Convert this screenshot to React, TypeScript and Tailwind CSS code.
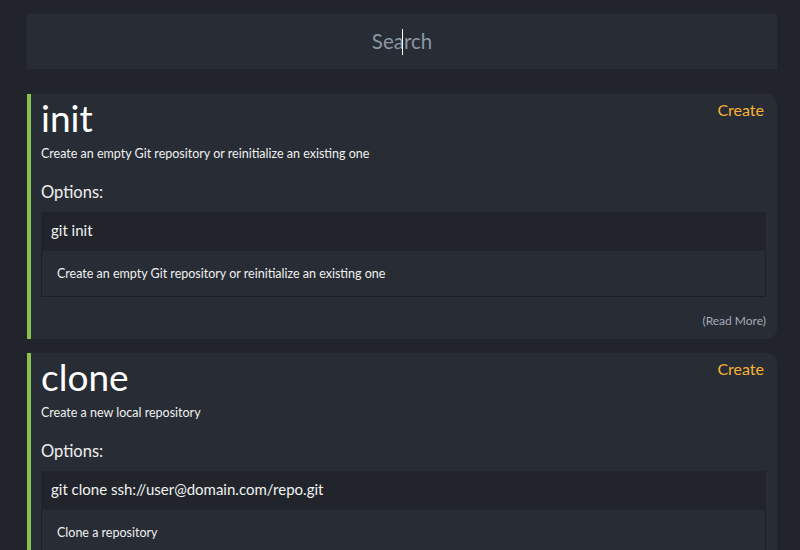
import React from "react";

interface Cmd {
  name: string;
  desc: string;
  options: { cmd: string; text: string }[];
}

const commands: Cmd[] = [
  {
    name: "init",
    desc: "Create an empty Git repository or reinitialize an existing one",
    options: [{ cmd: "git init", text: "Create an empty Git repository or reinitialize an existing one" }],
  },
  {
    name: "clone",
    desc: "Create a new local repository",
    options: [{ cmd: "git clone ssh://user@domain.com/repo.git", text: "Clone a repository" }],
  },
];

function Card({ c }: { c: Cmd }) {
  return (
    <div className="relative rounded-r-[10px] border-l-4 border-[#8bc34a] bg-[#282c34] pl-[10px] pr-[11px] pb-[10px]">
      <a className="absolute top-[5px] right-[13px] text-[16px] leading-[22px] text-[#f9b233] cursor-pointer">Create</a>
      <h1 className="text-[37px] leading-[47px] text-white">{c.name}</h1>
      <p className="mt-[4px] text-[12.5px] leading-[18px] text-[#f0f0f0]">{c.desc}</p>
      <h3 className="mt-[18px] text-[16.5px] leading-[22px] text-[#f0f0f0]">Options:</h3>
      {c.options.map((o) => (
        <div key={o.cmd} className="mt-[9px]">
          <div className="flex h-[39px] items-center bg-[#21252b] px-[10px] pb-[2px] text-[15px] text-[#f2f2f2]">{o.cmd}</div>
          <div className="border border-t-0 border-[#1c1f24] px-[15px] pt-[15px] pb-[14px] text-[12.5px] leading-[16px] text-[#f0f0f0]">
            {o.text}
          </div>
        </div>
      ))}
      <div className="mt-[16px] text-right text-[12px] leading-[16px] text-[#a3acb9]">(Read More)</div>
    </div>
  );
}

export default function App() {
  return (
    <div className="h-[550px] overflow-hidden bg-[#21252b] pl-[27px] pr-[23px] pt-[14px]" style={{ fontFamily: 'Lato, "Open Sans", sans-serif' }}>
      <div className="relative flex h-[55px] items-center justify-center bg-[#282c34]">
        <span className="text-[20.5px] text-[#8a97a3]">Search</span>
        <span className="absolute left-1/2 top-[15px] h-[26px] w-px bg-white" />
      </div>
      <div className="mt-[25px] flex flex-col gap-[14px]">
        {commands.map((c) => (
          <Card key={c.name} c={c} />
        ))}
      </div>
    </div>
  );
}
